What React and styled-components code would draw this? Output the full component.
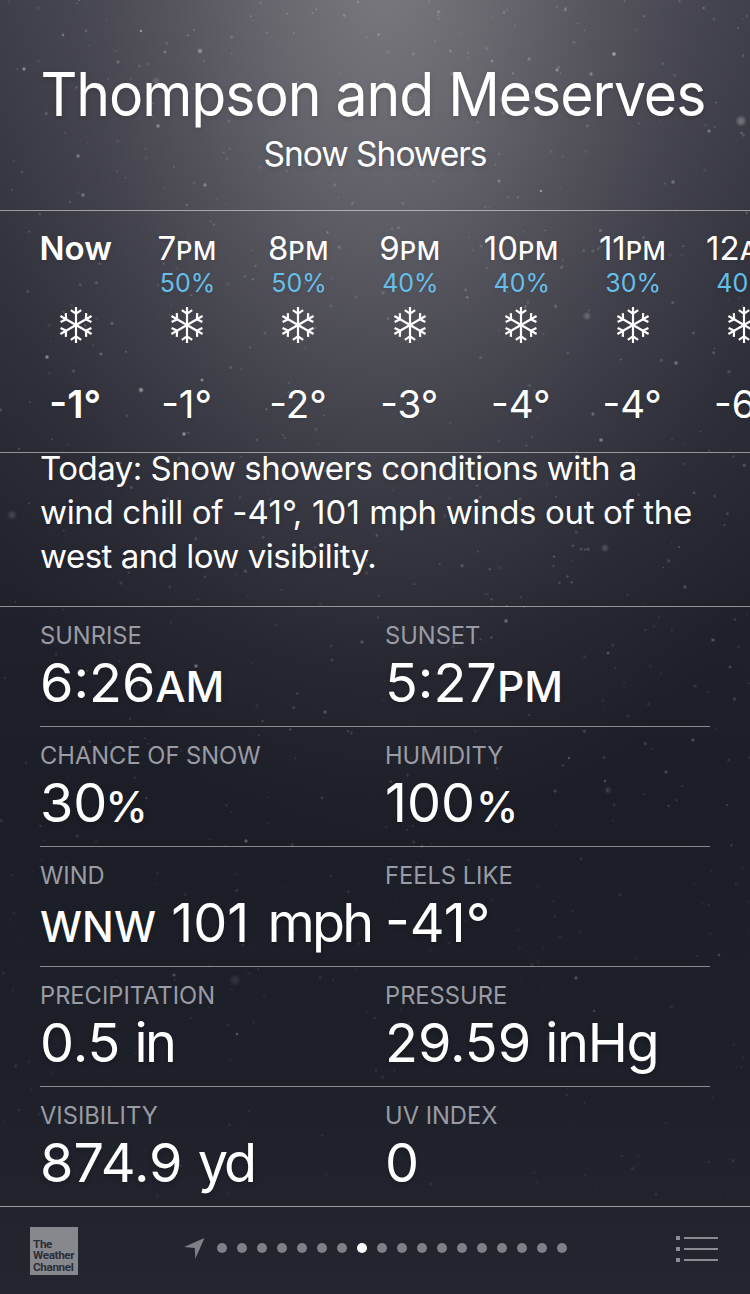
import styled, { createGlobalStyle } from "styled-components"

const GlobalStyle = createGlobalStyle`
    *{
        box-sizing:border-box;
    }
    body{
        margin:0;
        background:#1e1f2a;
        font-family:Inter, "Liberation Sans", sans-serif;
        color:#fff;
    }
`

const Screen = styled.main`
    position:relative;
    isolation:isolate;
    display:flex;
    flex-direction:column;
    width:750px;
    height:1294px;
    overflow:hidden;
    background:
        radial-gradient(ellipse 520px 880px at 385px -30px, rgba(132,131,136,.86) 0%, rgba(124,123,129,.73) 20%, rgba(114,113,120,.53) 40%, rgba(102,101,110,.32) 60%, rgba(90,89,99,.13) 80%, rgba(80,79,90,0) 100%),
        linear-gradient(180deg, #373742 0, #2f2f3a 220px, #262731 440px, #1f202a 640px, #1c1e27 800px, #1d1f29 1060px, #23252f 1294px);
`

const SnowLayer = styled.svg`
    position:absolute;
    inset:0;
    z-index:-1;
    width:100%;
    height:100%;
`

const Header = styled.header`
    display:flex;
    flex-direction:column;
    align-items:center;
    height:211px;
    padding-top:58px;
    border-bottom:1px solid rgba(255,255,255,.5);
    text-shadow:0 2px 5px rgba(0,0,0,.16);
    white-space:nowrap;
`

const City = styled.h1`
    margin:0 5px 4px 0;
    font-size:60px;
    font-weight:400;
    line-height:72px;
    letter-spacing:-1.1px;
    transform:scaleX(.953);
`

const Condition = styled.span`
    font-size:33.5px;
    line-height:40px;
    letter-spacing:-1px;
`

const Hourly = styled.section`
    display:flex;
    height:242px;
    padding:18px 0 0 20px;
    overflow:hidden;
    border-bottom:1px solid rgba(255,255,255,.5);
    text-shadow:0 1px 4px rgba(0,0,0,.12);
`

const Hour = styled.div`
    display:flex;
    flex:0 0 111.4px;
    flex-direction:column;
    align-items:center;
    white-space:nowrap;
    font-weight:${p => p.$now ? 600 : 400};
`

const Time = styled.span`
    height:38px;
    font-size:33px;
    line-height:38px;
`

const Small = styled.span`
    margin-left:${p => p.$gap || 0}px;
    font-size:${p => p.$size}px;
    font-weight:500;
    line-height:1;
    letter-spacing:${p => p.$track || 0}px;
`

const Chance = styled.span`
    height:32px;
    margin:0 0 8px 1px;
    font-size:25px;
    line-height:32px;
    color:#66bfea;
`

const Flake = styled.svg`
    width:36px;
    height:36px;
    margin-bottom:38px;
    fill:none;
    stroke:#fff;
    stroke-width:2.2;
`

const Temp = styled.span`
    margin-right:1px;
    font-size:38.5px;
    line-height:46px;
`

const Summary = styled.section`
    height:154px;
    padding:0 40px;
    border-bottom:1px solid rgba(255,255,255,.5);
    text-shadow:0 1px 4px rgba(0,0,0,.12);
`

const SummaryLine = styled.p`
    margin:0;
    font-size:33px;
    line-height:44px;
    letter-spacing:${p => p.$track || -.5}px;
    white-space:nowrap;
    &:first-child{
        margin-top:-7px;
    }
`

const Figures = styled.span`
    letter-spacing:.2px;
`

const Details = styled.section`
    display:flex;
    flex-direction:column;
    padding:0 40px;
`

const DetailRow = styled.div`
    display:grid;
    grid-template-columns:345px 1fr;
    height:120px;
    padding-top:14px;
    border-bottom:1px solid rgba(255,255,255,.48);
    &:last-child{
        height:119px;
        border-bottom:0;
    }
`

const Detail = styled.div`
    display:flex;
    flex-direction:column;
    white-space:nowrap;
`

const Label = styled.span`
    height:30px;
    font-size:23.7px;
    line-height:30px;
    color:#9a9ba4;
`

const Value = styled.span`
    height:64px;
    font-size:54px;
    line-height:64px;
    text-shadow:0 2px 5px rgba(0,0,0,.2);
`

const Colon = styled.span`
    line-height:1;
    vertical-align:.08em;
`

const Unit = styled.span`
    margin-left:${p => p.$gap || 0}px;
    letter-spacing:${p => p.$track || 0}px;
`

const Footer = styled.footer`
    display:flex;
    align-items:flex-start;
    justify-content:space-between;
    height:88px;
    padding:20px 32px 0 30px;
    border-top:1px solid rgba(255,255,255,.55);
`

const Logo = styled.div`
    display:flex;
    flex-direction:column;
    justify-content:flex-end;
    width:48px;
    height:48px;
    padding:0 0 2px 3px;
    background:#87888e;
    color:#2c2e39;
    font-family:Roboto, "Liberation Sans", sans-serif;
    font-size:11.7px;
    font-weight:700;
    line-height:11.4px;
    letter-spacing:-.35px;
`

const Pager = styled.div`
    display:flex;
    align-items:center;
    gap:10px;
    height:22px;
    margin:10px 0 0 -3px;
`

const Arrow = styled.svg`
    width:21px;
    height:21px;
    margin-right:2px;
    fill:#7f8088;
`

const Dot = styled.span`
    width:10px;
    height:10px;
    border-radius:50%;
    background:${p => p.$active ? "#fff" : "#7f8088"};
`

const ListIcon = styled.svg`
    width:42px;
    height:26px;
    margin-top:9px;
    fill:#8a8b93;
`

// a few big flakes placed by hand, [x, y, radius, opacity]
const flakes = [
    [200, 51, 2, .4], [24, 69, 1.5, .5], [614, 54, 1.6, .6], [741, 121, 4, .3],
    [158, 126, 1.6, .4], [78, 156, 1.5, .4], [83, 195, 1.7, .3], [205, 185, 1.6, .35],
    [673, 182, 1.6, .3], [709, 131, 1.5, .35], [541, 191, 1.2, .5], [557, 70, 1.6, .35],
    [156, 81, 3, .15], [47, 357, 1.6, .5], [101, 354, 1.4, .3], [141, 390, 2, .5],
    [202, 380, 1.4, .5], [184, 434, 1.7, .5], [587, 316, 3, .22], [676, 363, 1.7, .35],
    [601, 440, 1.6, .45], [593, 414, 1.5, .3], [12, 515, 3.5, .15], [605, 548, 3, .18],
    [196, 666, 1.6, .4], [246, 841, 1.5, .35], [235, 980, 4, .1], [362, 642, 1.5, .25],
    [325, 712, 1.6, .25], [608, 790, 3, .1], [174, 975, 1.5, .25], [237, 1034, 1.3, .3],
    [506, 621, 1.7, .35], [608, 653, 1.4, .25], [713, 640, 1.6, .25], [730, 667, 1.4, .2],
    [693, 740, 1.5, .25], [605, 781, 1.2, .3], [666, 772, 1.5, .22], [569, 758, 1.2, .3],
    [555, 791, 1.5, .2], [576, 978, 1.6, .25], [594, 1011, 1.3, .18], [719, 955, 1.3, .2],
    [63, 35, 1.3, .35], [165, 52, 1.4, .3], [141, 31, 1.2, .5], [118, 62, 1.5, .25],
    [492, 61, 1.3, .3], [529, 59, 1.5, .25], [591, 74, 1.5, .35], [499, 181, 1.5, .3],
]

const makeDust = () => {
    let seed = 41
    const next = () => {
        seed = (seed * 16807) % 2147483647
        return seed / 2147483647
    }
    return Array.from({ length: 660 }, () => {
        const x = next() * 750
        const y = Math.pow(next(), 1.15) * 1200
        const r = .7 + next() * .9
        const o = (.07 + next() * .16) * (y > 850 ? .5 : y > 600 ? .75 : 1)
        return [x, y, r, o]
    })
}

const dust = makeDust()

const Snow = () => {
    return (
        <SnowLayer viewBox="0 0 750 1294" aria-hidden="true">
            <defs>
                <radialGradient id="flake">
                    <stop offset="0" stopColor="#fff" />
                    <stop offset=".45" stopColor="#fff" stopOpacity=".7" />
                    <stop offset="1" stopColor="#fff" stopOpacity="0" />
                </radialGradient>
            </defs>
            {dust.concat(flakes).map(([x, y, r, o], i) => (
                <circle key={i} cx={x} cy={y} r={r * 1.5} fill="url(#flake)" opacity={o} />
            ))}
        </SnowLayer>
    )
}

const Snowflake = () => {
    return (
        <Flake viewBox="-18 -18 36 36">
            {[0, 60, 120, 180, 240, 300].map(a => (
                <path key={a} transform={`rotate(${a})`} d="M0 0V-18M-5.2 -14.8L0 -11.4L5.2 -14.8" />
            ))}
        </Flake>
    )
}

const hours = [
    { time: "Now", temp: "-1°", now: true },
    { time: "7", unit: "PM", chance: "50%", temp: "-1°" },
    { time: "8", unit: "PM", chance: "50%", temp: "-2°" },
    { time: "9", unit: "PM", chance: "40%", temp: "-3°" },
    { time: "10", unit: "PM", chance: "40%", temp: "-4°" },
    { time: "11", unit: "PM", chance: "30%", temp: "-4°" },
    { time: "12", unit: "AM", chance: "40%", temp: "-6°" },
]

const details = [
    [
        { label: "SUNRISE", value: <>6<Colon>:</Colon>26</>, after: "AM" },
        { label: "SUNSET", value: <>5<Colon>:</Colon>27</>, after: "PM" },
    ],
    [
        { label: "CHANCE OF SNOW", value: "30", after: "%", gap: -2 },
        { label: "HUMIDITY", value: "100", after: "%", gap: 1 },
    ],
    [
        { label: "WIND", before: "WNW", value: " 101 ", unit: "mph", gap: 3, track: -2.7 },
        { label: "FEELS LIKE", value: "-41°" },
    ],
    [
        { label: "PRECIPITATION", value: "0.5 ", unit: "in", gap: -1, track: -2.5 },
        { label: "PRESSURE", value: "29.59 ", unit: "inHg", gap: -1, track: -1.3 },
    ],
    [
        { label: "VISIBILITY", value: "874.9 ", unit: "yd", gap: 0, track: -3 },
        { label: "UV INDEX", value: "0" },
    ],
]

const DetailItem = ({ item }) => {
    return (
        <Detail>
            <Label>{item.label}</Label>
            <Value>
                {item.before && <Small $size={42}>{item.before}</Small>}
                {item.value}
                {item.unit && <Unit $gap={item.gap} $track={item.track}>{item.unit}</Unit>}
                {item.after && <Small $size={42.5} $gap={item.gap}>{item.after}</Small>}
            </Value>
        </Detail>
    )
}

const App = () => {
    return (
        <>
            <GlobalStyle />
            <Screen>
                <Snow />
                <Header>
                    <City>Thompson and Meserves</City>
                    <Condition>Snow Showers</Condition>
                </Header>
                <Hourly>
                    {hours.map(h => (
                        <Hour key={h.time} $now={h.now}>
                            <Time>{h.time}{h.unit && <Small $size={25.5} $track={.5}>{h.unit}</Small>}</Time>
                            <Chance>{h.chance}</Chance>
                            <Snowflake />
                            <Temp>{h.temp}</Temp>
                        </Hour>
                    ))}
                </Hourly>
                <Summary>
                    <SummaryLine>Today: Snow showers conditions with a</SummaryLine>
                    <SummaryLine $track={-.34}>wind chill of <Figures>-41°, 101</Figures> mph winds out of the</SummaryLine>
                    <SummaryLine>west and low visibility.</SummaryLine>
                </Summary>
                <Details>
                    {details.map(row => (
                        <DetailRow key={row[0].label}>
                            <DetailItem item={row[0]} />
                            <DetailItem item={row[1]} />
                        </DetailRow>
                    ))}
                </Details>
                <Footer>
                    <Logo>
                        <span>The</span>
                        <span>Weather</span>
                        <span>Channel</span>
                    </Logo>
                    <Pager>
                        <Arrow viewBox="0 0 21 21"><path d="M0 9L20.5 0L11.3 20.8L10.8 9.9Z" /></Arrow>
                        {Array.from({ length: 18 }, (_, i) => <Dot key={i} $active={i === 7} />)}
                    </Pager>
                    <ListIcon viewBox="0 0 42 26">
                        {[2, 13, 24].map(y => (
                            <g key={y}>
                                <rect x="0" y={y - 2} width="4" height="4" />
                                <rect x="8" y={y - 1} width="34" height="2" />
                            </g>
                        ))}
                    </ListIcon>
                </Footer>
            </Screen>
        </>
    )
}

export default App
